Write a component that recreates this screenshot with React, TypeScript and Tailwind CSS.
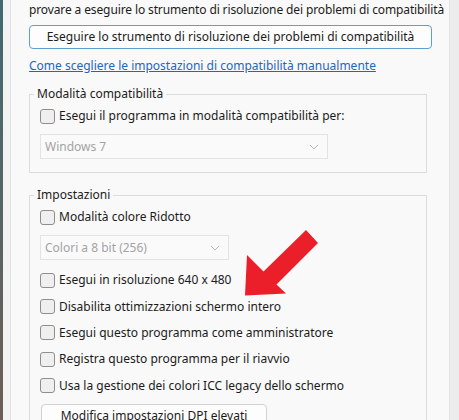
import React from "react";

function Check({ label }: { label: string }) {
  return (
    <div className="flex items-center h-[20px]">
      <span className="w-[15px] h-[15px] rounded-[3px] border border-[#8e8e8e] bg-[#efefef] shrink-0" />
      <span className="ml-[4px] text-[#1b1b1b] whitespace-nowrap">{label}</span>
    </div>
  );
}

function Row({ label }: { label: string }) {
  return (
    <div className="flex items-center h-[26.4px] shrink-0">
      <span className="w-[15px] h-[15px] rounded-[3px] border border-[#8e8e8e] bg-[#efefef] shrink-0" />
      <span className="ml-[4px] text-[#1b1b1b] whitespace-nowrap">{label}</span>
    </div>
  );
}

function Drop({ text, w }: { text: string; w: string }) {
  return (
    <div className={`flex items-center justify-between h-[25px] border border-[#e3e3e3] bg-[#fafafa] pl-[4px] pr-[8px] ${w}`}>
      <span className="text-[#a3a3a3]">{text}</span>
      <svg width="10" height="6" viewBox="0 0 10 6">
        <path d="M1 1 L5 5 L9 1" fill="none" stroke="#b8b8b8" strokeWidth="1" />
      </svg>
    </div>
  );
}

export default function App() {
  return (
    <div
      className="relative w-[459px] h-[420px] overflow-hidden flex bg-[#ececec] text-[12px] leading-[16px]"
      style={{ fontFamily: '"Noto Sans", sans-serif' }}
    >
      <div className="w-[3px] shrink-0 bg-gradient-to-b from-[#3f6a70] to-[#6b5e58]" />
      <div className="w-[7px] shrink-0 bg-[#f3f3f3]" />
      <div className="w-[1px] shrink-0 bg-[#e2e2e2]" />
      <div className="w-[438px] shrink-0 bg-[#f9f9f9] pl-[18px] pr-[16px] pt-[2px] flex flex-col">
        <div className="shrink-0 text-[#1b1b1b] whitespace-nowrap tracking-[-0.12px]">
          provare a eseguire lo strumento di risoluzione dei problemi di compatibilità
        </div>
        <div className="shrink-0 mt-[7px] h-[24px] w-[403px] rounded-[4px] border-[1.5px] border-[#5b9fd3] bg-[#fdfdfd] flex items-center justify-center text-[#1b1b1b] whitespace-nowrap">
          Eseguire lo strumento di risoluzione dei problemi di compatibilità
        </div>
        <div className="shrink-0 mt-[9px] text-[#1a68c0] underline whitespace-nowrap">
          Come scegliere le impostazioni di compatibilità manualmente
        </div>
        <fieldset className="shrink-0 mt-[12px] w-[398px] border border-[#dcdcdc] pl-[10px] pb-[13px]">
          <legend className="ml-[-6px] px-[3px] text-[#1b1b1b]">Modalità compatibilità</legend>
          <div className="pt-[4px]">
            <Check label="Esegui il programma in modalità compatibilità per:" />
          </div>
          <div className="mt-[8px]">
            <Drop text="Windows 7" w="w-[288px]" />
          </div>
        </fieldset>
        <fieldset className="shrink-0 mt-[14px] w-[398px] border border-[#dcdcdc] pl-[10px] pb-[40px]">
          <legend className="ml-[-6px] px-[3px] text-[#1b1b1b]">Impostazioni</legend>
          <div className="pt-[4px]">
            <Check label="Modalità colore Ridotto" />
          </div>
          <div className="mt-[8px]">
            <Drop text="Colori a 8 bit (256)" w="w-[189px]" />
          </div>
          <div className="mt-[7px] flex flex-col">
            <Row label="Esegui in risoluzione 640 x 480" />
            <Row label="Disabilita ottimizzazioni schermo intero" />
            <Row label="Esegui questo programma come amministratore" />
            <Row label="Registra questo programma per il riavvio" />
            <Row label="Usa la gestione dei colori ICC legacy dello schermo" />
          </div>
          <div className="mt-[5px] ml-[1px] h-[24px] w-[226px] rounded-[4px] border border-[#d2d2d2] bg-[#fdfdfd] flex items-center justify-center text-[#1b1b1b] whitespace-nowrap">
            Modifica impostazioni DPI elevati
          </div>
        </fieldset>
      </div>
      <div className="w-[1px] shrink-0 bg-[#e4e4e4]" />
      <div className="flex-1 bg-[#ececec]" />
      <svg className="absolute left-0 top-0 pointer-events-none" width="459" height="420">
        <polygon
          points="306,230 318,243 276.5,284.5 286,293.5 245,295.5 247,255 263.5,271.5"
          fill="#ea1f2a"
        />
      </svg>
    </div>
  );
}
